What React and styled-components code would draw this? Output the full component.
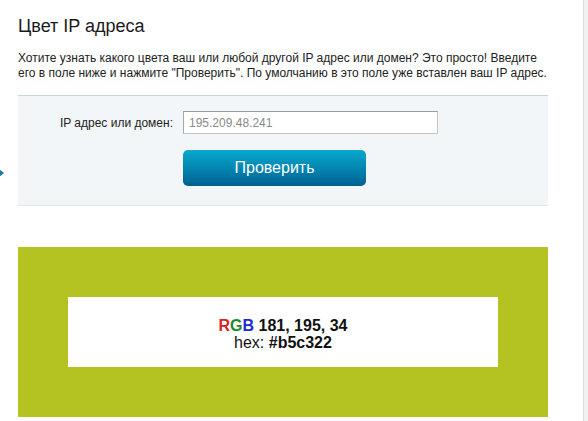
import React from 'react';
import styled, { createGlobalStyle } from 'styled-components';

const GlobalStyle = createGlobalStyle`
  * {
    box-sizing: border-box;
  }

  body {
    margin: 0;
    font-family: 'Liberation Sans', Arial, sans-serif;
    background: #ffffff;
    color: #222222;
  }
`;

const Page = styled.div`
  position: relative;
  display: flex;
  min-height: 421px;
  overflow: hidden;
`;

const Content = styled.main`
  width: 583px;
  padding: 15px 35px 0 18px;
`;

const Scrollbar = styled.div`
  width: 5px;
  background: #f1f1f1;
  border-left: 1px solid #dcdcdc;
`;

const SideArrow = styled.div`
  position: absolute;
  left: -2px;
  top: 168px;
  width: 0;
  height: 0;
  border-top: 5px solid transparent;
  border-bottom: 5px solid transparent;
  border-left: 6px solid #1b7aa6;
`;

const Title = styled.h1`
  margin: 0;
  font-size: 18px;
  line-height: 22px;
  font-weight: normal;
  color: #1a1a1a;
`;

const Intro = styled.p`
  margin: 14px 0 14px;
  font-size: 12px;
  line-height: 15px;
  color: #222222;
`;

const FormPanel = styled.section`
  background: #f2f6f8;
  border-top: 1px solid #c9d4db;
  border-bottom: 1px solid #e3e8eb;
  padding: 15px 0 19px 30px;
`;

const FieldRow = styled.div`
  display: flex;
  align-items: center;
  gap: 10px;
`;

const Label = styled.label`
  flex-shrink: 0;
  width: 125px;
  white-space: nowrap;
  text-align: right;
  font-size: 12px;
  color: #222222;
`;

const Input = styled.input`
  flex-shrink: 0;
  width: 255px;
  height: 23px;
  padding: 0 5px;
  border: 1px solid #c4c4c4;
  border-top-color: #9a9a9a;
  border-left-color: #a8a8a8;
  font-family: inherit;
  font-size: 12px;
  color: #8a8a8a;
  background: #ffffff;
  outline: none;
`;

const SubmitButton = styled.button`
  display: block;
  margin: 16px 0 0 135px;
  width: 183px;
  height: 36px;
  border: none;
  border-radius: 5px;
  background: linear-gradient(to bottom, #09a7cc 0%, #0387b3 50%, #005f8f 100%);
  color: #ffffff;
  font-family: inherit;
  font-size: 16px;
  cursor: pointer;
`;

const ColorArea = styled.section`
  margin-top: 41px;
  height: 170px;
  padding: 50px;
  background: ${(p) => p.$color};
`;

const ResultBox = styled.div`
  height: 70px;
  background: #ffffff;
  display: flex;
  flex-direction: column;
  justify-content: center;
  align-items: center;
  padding-top: 3px;
  font-size: 16px;
  line-height: 17px;
  color: #111111;
`;

const Strong = styled.b`
  font-weight: bold;
`;

const Channel = styled.span`
  font-weight: bold;
  color: ${(p) => p.$c};
`;

function App() {
  const rgb = [181, 195, 34];
  const hex = '#b5c322';

  return (
    <Page>
      <GlobalStyle />
      <SideArrow />
      <Content>
        <Title>Цвет IP адреса</Title>
        <Intro>
          Хотите узнать какого цвета ваш или любой другой IP адрес или домен? Это просто! Введите
          <br />
          его в поле ниже и нажмите "Проверить". По умолчанию в это поле уже вставлен ваш IP адрес.
        </Intro>

        <FormPanel>
          <FieldRow>
            <Label htmlFor="ip">IP адрес или домен:</Label>
            <Input id="ip" defaultValue="195.209.48.241" />
          </FieldRow>
          <SubmitButton>Проверить</SubmitButton>
        </FormPanel>

        <ColorArea $color={hex}>
          <ResultBox>
            <div>
              <Channel $c="#e0201c">R</Channel>
              <Channel $c="#1f8a2c">G</Channel>
              <Channel $c="#1c2ad0">B</Channel>{' '}
              <Strong>{rgb.join(', ')}</Strong>
            </div>
            <div>
              hex: <Strong>{hex}</Strong>
            </div>
          </ResultBox>
        </ColorArea>
      </Content>
      <Scrollbar />
    </Page>
  );
}

export default App;
